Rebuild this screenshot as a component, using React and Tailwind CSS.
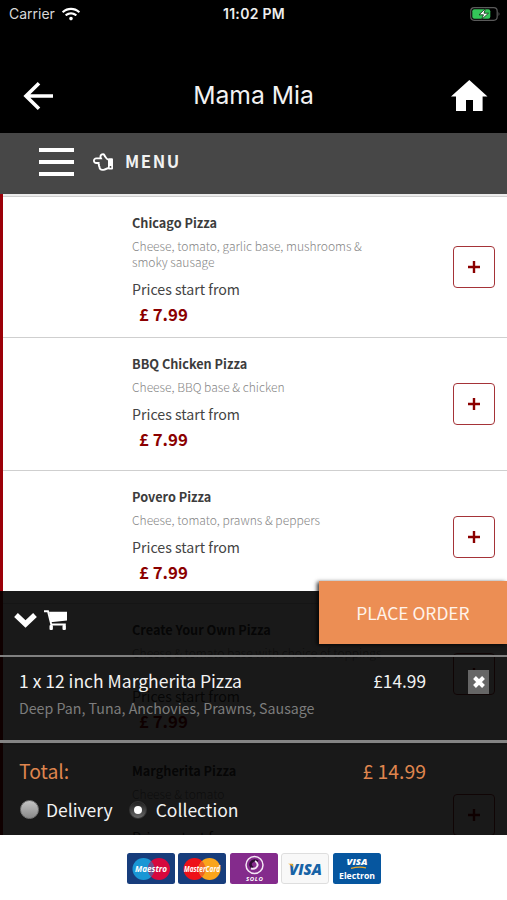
import React, { useState } from 'react'
import { FaRegHandPointLeft, FaWifi } from 'react-icons/fa'

const pizzas = [
  { name: 'Chicago Pizza', desc: 'Cheese, tomato, garlic base, mushrooms & smoky sausage', tall: true },
  { name: 'BBQ Chicken Pizza', desc: 'Cheese, BBQ base & chicken' },
  { name: 'Povero Pizza', desc: 'Cheese, tomato, prawns & peppers' },
  { name: 'Create Your Own Pizza', desc: 'Cheese & tomato base with choice of toppings', tall: true },
  { name: 'Margherita Pizza', desc: 'Cheese & tomato', tall: true },
]

const StatusBar = () => {
  return (
    <div className="grid grid-cols-3 h-[27px] items-center pl-[9px] pr-[6px] text-white">
      <div className="flex items-center gap-[7px]">
        <span className="text-[14px] text-[#d8d8d8]">Carrier</span>
        <FaWifi size={18} />
      </div>
      <p className="text-center text-[14px] tracking-[0.3px] font-semibold text-[#eee] pr-[2px]">11:02 PM</p>
      <svg className="justify-self-end" width="31" height="14" viewBox="0 0 31 14">
        <rect x="0.7" y="0.7" width="26.5" height="12.6" rx="3.5" fill="none" stroke="#5a5a5a" strokeWidth="1.2" />
        <rect x="2.3" y="2.3" width="18" height="9.4" rx="2" fill="#34c759" />
        <path d="M28.5 5v4q2-2 0-4" fill="#5a5a5a" />
        <path d="M15.500 1.500L9 7.800h4.500L11.500 12.500 18.500 6.200h-4.500z" fill="#fff" stroke="#0a2a12" strokeWidth="0.8" />
      </svg>
    </div>
  )
}

const Header = () => {
  return (
    <header className="h-[133px] shrink-0 bg-black font-['Inter',sans-serif]">
      <StatusBar />
      <div className="flex h-[106px] items-center justify-between pt-[31px] pl-[23px] pr-[19px]">
        <button className="w-[37px]">
          <svg width="30" height="28" viewBox="0 0 30 28" fill="none" stroke="#fff" strokeWidth="3.6">
            <path d="M2.5 14H30M16 1.300L3 14l13 12.700" />
          </svg>
        </button>
        <h1 className="text-[24.7px] leading-[30px] text-[#f2f2f2] pr-[4px] pb-[2px]">Mama Mia</h1>
        <button className="w-[37px]">
          <svg width="37" height="31" viewBox="0 0 37 31" fill="#fff">
            <path d="M18.300 0L36.500 16.500H31.600V31H22V20H15V31H5V16.500H0z" />
          </svg>
        </button>
      </div>
    </header>
  )
}

const MenuBar = () => {
  return (
    <nav className="flex h-[61px] shrink-0 items-center bg-[#474747] pl-[39px] pb-[4px] text-white">
      <div className="flex flex-col gap-[8px]">
        <span className="h-[4px] w-[35px] bg-white" />
        <span className="h-[4px] w-[35px] bg-white" />
        <span className="h-[4px] w-[35px] bg-white" />
      </div>
      <FaRegHandPointLeft className="ml-[19px]" size={20} />
      <span className="ml-[12px] pb-px text-[16.7px] leading-[24px] font-bold tracking-[1.6px] text-[#f2f2f2]">MENU</span>
    </nav>
  )
}

const PizzaRow = ({ pizza }) => {
  return (
    <li className={`flex shrink-0 items-center justify-between border-b-[1.5px] border-[#cfcfcf] pl-[129px] pr-[12px] ${pizza.tall ? 'h-[141px]' : 'h-[133px]'}`}>
      <div className="w-[250px] h-full pt-[16px]">
        <h3 className="text-[12.7px] leading-[20px] font-bold text-[#3c3c3c]">{pizza.name}</h3>
        <p className={`mt-[5px] text-[12.05px] leading-[16px] font-light text-[#858585] ${pizza.tall ? 'h-[32px]' : 'h-[16px]'}`}>{pizza.desc}</p>
        <p className="mt-[8px] text-[14.2px] leading-[22px] text-[#444]">Prices start from</p>
        <p className="pl-[7px] text-[16.8px] leading-[28px] font-bold text-[#8b0000]">£ 7.99</p>
      </div>
      <button className="flex w-[42px] h-[42px] items-center justify-center rounded-[4px] border-[1.5px] border-[#a53338]">
        <svg width="12" height="12" viewBox="0 0 12 12">
          <path d="M6 0v12M0 6h12" stroke="#8b0000" strokeWidth="2.4" />
        </svg>
      </button>
    </li>
  )
}

const Radio = ({ label, checked, onChange }) => {
  return (
    <label className="flex items-center">
      <input type="radio" name="orderType" className="sr-only" checked={checked} onChange={onChange} />
      {checked ? (
        <span className="flex w-[18px] h-[18px] items-center justify-center rounded-full border border-[#333] bg-linear-to-b from-[#222] to-[#686868]">
          <span className="w-[8px] h-[8px] rounded-full bg-white" />
        </span>
      ) : (
        <span className="w-[19px] h-[19px] rounded-full border border-[#777] bg-linear-to-b from-[#c4c4c4] to-[#8a8a8a]" />
      )}
      <span className={`pt-px text-[17.5px] leading-[26px] text-[#f2f2f2] ${checked ? 'ml-[9px]' : 'ml-[7px]'}`}>{label}</span>
    </label>
  )
}

const Basket = () => {
  const [orderType, setOrderType] = useState('collection')

  return (
    <section className="absolute inset-x-0 bottom-0 h-[244px] bg-black/90">
      <div className="flex h-[66px] items-center border-b-2 border-[#808080] pl-[14px] pb-[7px]">
        <svg width="23" height="16" viewBox="0 0 23 16" fill="none" stroke="#fff" strokeWidth="5.4">
          <path d="M2 3l9.500 9L21 3" />
        </svg>
        <svg className="ml-[7px]" width="24" height="20" viewBox="0 0 24 20">
          <path d="M0 1.300h4l3.300 13.200h14.500" fill="none" stroke="#fff" strokeWidth="1.9" />
          <path d="M5 1.800H23V10.500L6.700 12.300z" fill="#fff" />
          <rect x="5.5" y="15" width="3.4" height="5" rx="1" fill="#fff" />
          <rect x="18.5" y="15" width="3.4" height="5" rx="1" fill="#fff" />
        </svg>
      </div>
      <button className="absolute right-0 -top-[10px] w-[188px] h-[63px] bg-[#ec8e54] text-[17.4px] leading-[63px] text-[#fff3ea] shadow-[-2px_1px_4px_rgba(0,0,0,0.8)]">PLACE ORDER</button>

      <div className="flex h-[86px] justify-between border-b-3 border-[#858585] pl-[19px] pr-[18px]">
        <div className="pt-[10px]">
          <p className="text-[17.5px] leading-[28px] text-[#f2f2f2]">1 x 12 inch Margherita Pizza</p>
          <p className="text-[14.2px] leading-[26px] text-[#7d7d7d]">Deep Pan, Tuna, Anchovies, Prawns, Sausage</p>
        </div>
        <div className="flex gap-[42px] pt-[10px]">
          <p className="text-[17.3px] leading-[28px] text-[#f2f2f2]">£14.99</p>
          <button className="flex mt-[3px] w-[21px] h-[24px] items-center justify-center bg-[#666]">
            <svg width="12" height="12" viewBox="0 0 12 12">
              <path d="M1.500 1.500l9 9M10.500 1.500l-9 9" stroke="#fff" strokeWidth="4" />
            </svg>
          </button>
        </div>
      </div>

      <div className="flex justify-between pt-[13px] pl-[19px] pr-[81px] text-[19.4px] leading-[30px] text-[#df854e]">
        <span>Total:</span>
        <span>£ 14.99</span>
      </div>
      <div className="flex gap-[16px] pt-[10px] pl-[20px]">
        <Radio label="Delivery" checked={orderType === 'delivery'} onChange={() => setOrderType('delivery')} />
        <Radio label="Collection" checked={orderType === 'collection'} onChange={() => setOrderType('collection')} />
      </div>
    </section>
  )
}

const PaymentCards = () => {
  return (
    <footer className="flex h-[65px] shrink-0 justify-center gap-[3.5px] bg-white pt-[18px]">
      <svg width="48" height="31" viewBox="0 0 48 31">
        <rect width="48" height="31" rx="2.5" fill="#173d7c" />
        <circle cx="16.5" cy="16" r="11" fill="#1997d5" />
        <circle cx="32" cy="16" r="11" fill="#d6083d" />
        <path d="M24.250 8.200a11 11 0 0 1 0 15.600a11 11 0 0 1 0-15.600" fill="#704f8b" />
        <text x="24" y="19" textAnchor="middle" fill="#fff" fontSize="9" fontWeight="700" fontStyle="italic" fontFamily="Open Sans, sans-serif" textLength="32" lengthAdjust="spacingAndGlyphs">Maestro</text>
      </svg>
      <svg width="48" height="31" viewBox="0 0 48 31">
        <rect width="48" height="31" rx="2.5" fill="#173d7c" />
        <circle cx="16.5" cy="16" r="11" fill="#ee1118" />
        <circle cx="31.5" cy="16" r="11" fill="#f9a51c" />
        <path d="M24 8a11 11 0 0 1 0 16a11 11 0 0 1 0-16" fill="#ee6524" />
        <text x="24" y="19" textAnchor="middle" fill="#fff" fontSize="8.5" fontWeight="700" fontStyle="italic" fontFamily="Open Sans, sans-serif" textLength="36" lengthAdjust="spacingAndGlyphs">MasterCard</text>
      </svg>
      <svg width="48" height="31" viewBox="0 0 48 31">
        <rect width="48" height="31" rx="2.5" fill="#842b8c" />
        <circle cx="24.5" cy="12" r="8.5" fill="none" stroke="#f4e8f5" strokeWidth="1.5" />
        <path d="M28 8.500c-7-3-10 4-5 6.500" fill="none" stroke="#2b0b32" strokeWidth="2.6" />
        <path d="M25 8c5 3 2 9-4 7.500" fill="none" stroke="#f4e8f5" strokeWidth="1.9" />
        <text x="24.5" y="28" textAnchor="middle" fill="#fff" fontSize="6" fontStyle="italic" fontWeight="700" fontFamily="Open Sans, sans-serif" textLength="17">SOLO</text>
      </svg>
      <svg width="48" height="31" viewBox="0 0 48 31">
        <rect x="0.5" y="0.5" width="47" height="30" rx="2.5" fill="#f8f8f8" stroke="#dedede" />
        <text x="24.5" y="21.5" textAnchor="middle" fill="#1763a6" fontSize="15" fontWeight="800" fontStyle="italic" fontFamily="Open Sans, sans-serif" textLength="33" lengthAdjust="spacingAndGlyphs">VISA</text>
        <path d="M7 10.800h4.500l1.200 4.200C11.500 12.800 9.500 11.500 7 10.800z" fill="#f3a91d" />
      </svg>
      <svg width="48" height="31" viewBox="0 0 48 31">
        <rect width="48" height="31" rx="2.5" fill="#06569f" />
        <text x="24" y="12" textAnchor="middle" fill="#fff" fontSize="9.5" fontWeight="800" fontStyle="italic" fontFamily="Open Sans, sans-serif" textLength="21" lengthAdjust="spacingAndGlyphs">VISA</text>
        <path d="M18 15.300q8-2 15-0.500" fill="none" stroke="#e5a52c" strokeWidth="1.3" />
        <text x="24" y="25.5" textAnchor="middle" fill="#fff" fontSize="9" fontWeight="700" fontFamily="Open Sans, sans-serif" textLength="36" lengthAdjust="spacingAndGlyphs">Electron</text>
      </svg>
    </footer>
  )
}

export default function App() {
  return (
    <div className="flex w-[507px] h-[900px] flex-col overflow-hidden bg-white font-['Noto_Sans_CJK_SC',sans-serif]">
      <Header />
      <MenuBar />
      <main className="relative h-[641px] shrink-0">
        <div className="h-full overflow-hidden border-l-3 border-[#9b0008]">
          <div className="h-[3px] border-b border-[#cfcfcf] bg-[#ececec]" />
          <ul className="flex flex-col">
            {pizzas.map((pizza) => <PizzaRow key={pizza.name} pizza={pizza} />)}
          </ul>
        </div>
        <Basket />
      </main>
      <PaymentCards />
    </div>
  )
}
